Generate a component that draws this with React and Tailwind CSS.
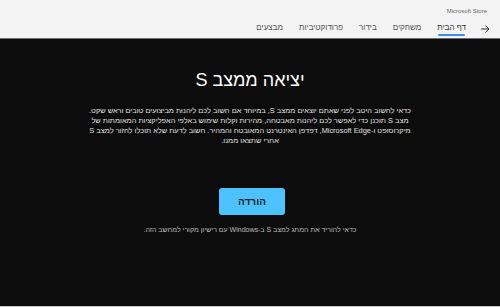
export default function App() {
  const font = { fontFamily: '"Liberation Sans", "DejaVu Sans", sans-serif' };
  return (
    <div className="w-[500px] h-[307px] flex flex-col bg-[#0c0c0c] overflow-hidden" style={font}>
      <div className="h-[39px] bg-[#f3f3f3] border-b border-[#6e6e6e] flex flex-col shrink-0">
        <div className="h-[20px] flex justify-end items-center pr-[13px] pt-[3px] text-[6px] text-[#666]">Microsoft Store</div>
        <div dir="rtl" className="flex items-center pr-[10px] pt-[2px] gap-0 text-[8px] text-[#555]">
          <span className="ml-[14px] text-[#333]">
            <svg width="10" height="10" viewBox="0 0 10 10" fill="none" stroke="#333" strokeWidth="1">
              <path d="M1 5h8M5.5 1.5L9 5l-3.5 3.5" />
            </svg>
          </span>
          <div className="flex flex-col items-center ml-[16px] text-[#333]">
            <span className="leading-[12px]">דף הבית</span>
            <span className="h-[1.5px] w-[27px] bg-[#3d8ede] rounded"></span>
          </div>
          <span className="ml-[16px] leading-[12px] pb-[1.5px]">משחקים</span>
          <span className="ml-[16px] leading-[12px] pb-[1.5px]">בידור</span>
          <span className="ml-[16px] leading-[12px] pb-[1.5px]">פרודוקטיביות</span>
          <span className="leading-[12px] pb-[1.5px]">מבצעים</span>
        </div>
      </div>
      <div dir="rtl" className="flex-1 flex flex-col items-center border-b border-[#c8c8c8]">
        <div className="mt-[29px] text-[18px] text-white leading-[24px]">יציאה ממצב S</div>
        <div className="mt-[14px] text-[7.4px] leading-[10px] text-[#e0e0e0] text-center whitespace-nowrap">
          <div>כדאי לחשוב היטב לפני שאתם יוצאים ממצב S, במיוחד אם חשוב לכם ליהנות מביצועים טובים וראש שקט.</div>
          <div>מצב S תוכנן כדי לאפשר לכם ליהנות מאבטחה, מהירות וקלות שימוש באלפי האפליקציות המאומתות של</div>
          <div>מיקרוסופט ו-Microsoft Edge, דפדפן האינטרנט המאובטח והמהיר. חשוב לדעת שלא תוכלו לחזור למצב S</div>
          <div>אחרי שתצאו ממנו.</div>
        </div>
        <button className="mt-[42px] ml-[4px] w-[66px] h-[27px] rounded-[3px] bg-[#4cc2ff] text-[#0a1a24] text-[10px] font-semibold flex items-center justify-center">הורדה</button>
        <div className="mt-[10px] text-[7px] text-[#bdbdbd]">כדאי להוריד את המתג למצב S ב-Windows עם רישיון מקורי למחשב הזה.</div>
      </div>
    </div>
  );
}
